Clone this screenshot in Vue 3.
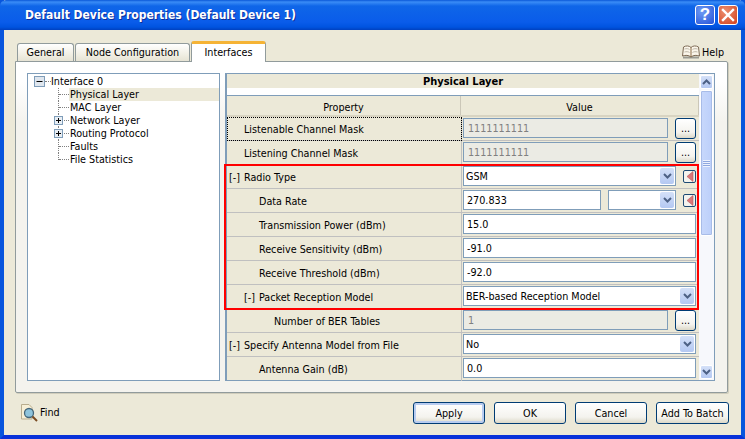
<template>
  <div class="window">
    <div class="titlebar">
      <span class="title">Default Device Properties (Default Device 1)</span>
      <button class="cap cap-help">?</button>
      <button class="cap cap-close">
        <svg width="14" height="14" viewBox="0 0 14 14"><path d="M2 2 L12 12 M12 2 L2 12" stroke="#fff" stroke-width="2.4" stroke-linecap="square" /></svg>
      </button>
    </div>

    <div class="body">
      <div class="tabbar">
        <div class="tab tab-general">General</div>
        <div class="tab tab-node">Node Configuration</div>
        <div class="tab tab-active">Interfaces</div>
        <div class="help-link">
          <svg width="18" height="16" viewBox="0 0 18 16">
            <path d="M1 13.500 H17" stroke="#9a9a92" stroke-width="2" />
            <path d="M1.500 3 C4 1.500 7 1.500 9 3.500 C11 1.500 14 1.500 16.500 3 L17.500 12 C14.500 11 11.500 11 9 13 C6.500 11 3.500 11 0.500 12 Z" fill="#fbf6ea" stroke="#7d6a55" />
            <path d="M9 3.500 V13" stroke="#8a6a44" />
            <path d="M2.500 5 C4.500 4.500 6 4.500 7.500 5.500 M2.500 8 C4.500 7.500 6 7.500 7.500 8.500" stroke="#bdb6a8" fill="none" />
            <path d="M10.500 5.500 C12 4.500 13.500 4.500 15.500 5 M10.500 8.500 C12 7.500 13.500 7.500 15.500 8" stroke="#bdb6a8" fill="none" />
          </svg>
          <span>Help</span>
        </div>
      </div>

      <div class="pane">
        <div class="tree">
          <div class="tree-row root">
            <span class="expander">
              <svg width="11" height="11" viewBox="0 0 11 11"><rect x="0.500" y="0.500" width="10" height="10" fill="#dfe6ee" stroke="#7f9db9" /><path d="M2.500 5.500 H8.500" stroke="#000" /></svg>
            </span>
            <span class="root-dash"></span>
            <span>Interface 0</span>
          </div>
          <div
            v-for="(node, i) in treeNodes"
            :key="node.label"
            class="tree-row child"
            :class="{ last: i === treeNodes.length - 1 }"
          >
            <span class="stem">
              <svg v-if="node.plus" class="plus" width="9" height="9" viewBox="0 0 9 9"><rect x="0.500" y="0.500" width="8" height="8" fill="#e8eef4" stroke="#7f9db9" /><path d="M2 4.500 H7 M4.500 2 V7" stroke="#000" /></svg>
            </span>
            <span class="tree-label" :class="{ selected: node.selected }">{{ node.label }}</span>
          </div>
        </div>

        <div class="props">
          <div class="props-main">
            <div class="section-title">Physical Layer</div>
            <div class="section-gap"></div>
            <div class="head">
              <div class="head-cell">Property</div>
              <div class="head-cell">Value</div>
            </div>
            <div
              v-for="(row, i) in rows"
              :key="row.name"
              class="row"
              :class="{ 'row-last': i === rows.length - 1 }"
            >
              <div class="name" :class="{ focused: row.focus }" :style="{ paddingLeft: row.level * 15 + 2 + 'px' }">
                <span v-if="row.open" class="bracket">[-]</span>{{ row.name }}
              </div>
              <div class="value">
                <template v-if="row.type === 'locked'">
                  <div class="field locked">{{ row.value }}</div>
                  <button class="dots">...</button>
                </template>
                <div v-else-if="row.type === 'text'" class="field">{{ row.value }}</div>
                <div v-else-if="row.type === 'combo'" class="field combo">
                  <span>{{ row.value }}</span>
                  <span class="drop"><svg width="9" height="6" viewBox="0 0 9 6"><path d="M1 1 L4.500 4.500 L8 1" fill="none" stroke="#4d6185" stroke-width="2" /></svg></span>
                </div>
                <template v-else-if="row.type === 'radio'">
                  <div class="field combo narrow">
                    <span>{{ row.value }}</span>
                    <span class="drop"><svg width="9" height="6" viewBox="0 0 9 6"><path d="M1 1 L4.500 4.500 L8 1" fill="none" stroke="#4d6185" stroke-width="2" /></svg></span>
                  </div>
                  <span class="marker"><svg width="8" height="11" viewBox="0 0 8 11"><path d="M7 0.500 V10.500 L1 5.500 Z" fill="#d9777a" stroke="#b9595c" stroke-width="0.600" /></svg></span>
                </template>
                <template v-else-if="row.type === 'rate'">
                  <div class="field rate">{{ row.value }}</div>
                  <div class="field combo unit">
                    <span></span>
                    <span class="drop"><svg width="9" height="6" viewBox="0 0 9 6"><path d="M1 1 L4.500 4.500 L8 1" fill="none" stroke="#4d6185" stroke-width="2" /></svg></span>
                  </div>
                  <span class="marker"><svg width="8" height="11" viewBox="0 0 8 11"><path d="M7 0.500 V10.500 L1 5.500 Z" fill="#d9777a" stroke="#b9595c" stroke-width="0.600" /></svg></span>
                </template>
              </div>
            </div>
            <div class="highlight"></div>
          </div>

          <div class="scrollbar">
            <div class="sb-btn"><svg width="9" height="6" viewBox="0 0 9 6"><path d="M1 5 L4.500 1.500 L8 5" fill="none" stroke="#4d6185" stroke-width="2" /></svg></div>
            <div class="sb-thumb"><span class="grip"></span></div>
            <div class="sb-space"></div>
            <div class="sb-btn"><svg width="9" height="6" viewBox="0 0 9 6"><path d="M1 1 L4.500 4.500 L8 1" fill="none" stroke="#4d6185" stroke-width="2" /></svg></div>
          </div>
        </div>
      </div>

      <div class="footer">
        <div class="find">
          <svg width="17" height="18" viewBox="0 0 17 18">
            <path d="M0.500 0.500 H8 L11 3.500 V15 H0.500 Z" fill="#f7efd6" stroke="#b9ad8e" />
            <circle cx="8" cy="9" r="4.500" fill="#8fc4dc" stroke="#44667a" stroke-width="1.300" />
            <path d="M11.500 12.500 L16 17" stroke="#7a4a20" stroke-width="2" />
          </svg>
          <span>Find</span>
        </div>
        <div class="actions">
          <button class="btn default">Apply</button>
          <button class="btn">OK</button>
          <button class="btn">Cancel</button>
          <button class="btn">Add To Batch</button>
        </div>
      </div>
    </div>
  </div>
</template>

<script setup>
const treeNodes = [
  { label: 'Physical Layer', selected: true },
  { label: 'MAC Layer' },
  { label: 'Network Layer', plus: true },
  { label: 'Routing Protocol', plus: true },
  { label: 'Faults' },
  { label: 'File Statistics' },
]

const rows = [
  { name: 'Listenable Channel Mask', level: 1, type: 'locked', value: '1111111111', focus: true },
  { name: 'Listening Channel Mask', level: 1, type: 'locked', value: '1111111111' },
  { name: 'Radio Type', level: 0, open: true, type: 'radio', value: 'GSM' },
  { name: 'Data Rate', level: 2, type: 'rate', value: '270.833' },
  { name: 'Transmission Power (dBm)', level: 2, type: 'text', value: '15.0' },
  { name: 'Receive Sensitivity (dBm)', level: 2, type: 'text', value: '-91.0' },
  { name: 'Receive Threshold (dBm)', level: 2, type: 'text', value: '-92.0' },
  { name: 'Packet Reception Model', level: 1, open: true, type: 'combo', value: 'BER-based Reception Model' },
  { name: 'Number of BER Tables', level: 3, type: 'locked', value: '1' },
  { name: 'Specify Antenna Model from File', level: 0, open: true, type: 'combo', value: 'No' },
  { name: 'Antenna Gain (dB)', level: 2, type: 'text', value: '0.0' },
]
</script>

<style>
html, body {
  margin: 0;
  background: #0831d9;
}
</style>

<style scoped>
* {
  box-sizing: border-box;
}

.window {
  width: 745px;
  height: 439px;
  display: flex;
  flex-direction: column;
  background: #ece9d8;
  border-left: 4px solid #0855dd;
  border-right: 4px solid #0855dd;
  border-bottom: 4px solid #0831d9;
  font-family: "DejaVu Sans Condensed", "DejaVu Sans", sans-serif;
  font-size: 10.7px;
  color: #000;
}

.titlebar {
  height: 30px;
  margin: 0 -4px;
  padding: 0 7px 0 25px;
  display: flex;
  align-items: center;
  gap: 3px;
  background: linear-gradient(#0a58d8 0, #3a8cf6 2px, #0f66e8 6px, #0a5cea 22px, #0054e0 27px, #0041c0 30px);
  border-radius: 6px 6px 0 0;
}

.title {
  flex: 1;
  color: #fff;
  font-weight: bold;
  font-size: 12px;
  text-shadow: 1px 1px 0 #0f2f9a;
}

.cap {
  width: 20px;
  height: 20px;
  padding: 0;
  border: 1px solid #fff;
  border-radius: 3px;
  display: flex;
  align-items: center;
  justify-content: center;
  color: #fff;
}

.cap-help {
  background: radial-gradient(circle at 35% 30%, #6f9cf4, #2452d8);
  font-family: "Liberation Sans", sans-serif;
  font-size: 17px;
  font-weight: bold;
}

.cap-close {
  background: radial-gradient(circle at 35% 30%, #ec8f70, #d2401c);
}

.body {
  flex: 1;
  min-height: 0;
  padding: 11px 13px 0 11px;
  display: flex;
  flex-direction: column;
}

.tabbar {
  height: 20px;
  display: flex;
  align-items: flex-end;
  padding-left: 2px;
  position: relative;
  z-index: 1;
}

.tab {
  height: 18px;
  margin-right: 1px;
  display: flex;
  align-items: center;
  justify-content: center;
  border: 1px solid #919b9c;
  border-bottom: none;
  border-radius: 3px 3px 0 0;
  background: linear-gradient(#fff, #f1efe4 60%, #e6e3d4);
}

.tab-general {
  width: 57px;
}

.tab-node {
  width: 115px;
}

.tab-active {
  width: 75px;
  height: 21px;
  margin: 0 0 -1px;
  padding-bottom: 2px;
  background: #fff;
  border-top: 3px solid #f5b335;
}

.help-link {
  margin-left: auto;
  margin-right: 4px;
  display: flex;
  align-items: center;
  gap: 2px;
  height: 20px;
  transform: translateY(1px);
}

.pane {
  height: 332px;
  padding: 11px 12px 11px 11px;
  display: flex;
  gap: 5px;
  border: 1px solid #919b9c;
  border-radius: 0 2px 2px 2px;
  box-shadow: 1px 1px 0 #d0cdbc;
  background: linear-gradient(#fff, #fff 20px, #f4f3ee 60px);
}

.tree {
  width: 193px;
  padding: 1px 0 0;
  background: #fff;
  border: 1px solid #7f9db9;
}

.tree-row {
  height: 13px;
  display: flex;
  align-items: center;
}

.root {
  padding-left: 6px;
}

.expander {
  width: 11px;
  height: 11px;
  display: flex;
}

.root-dash {
  width: 6px;
  border-top: 1px dotted #808080;
}

.child {
  padding-left: 30px;
}

.stem {
  width: 11px;
  height: 13px;
  flex: none;
  position: relative;
  border-left: 1px dotted #808080;
}

.stem::after {
  content: "";
  position: absolute;
  left: 0;
  top: 6px;
  width: 10px;
  border-top: 1px dotted #808080;
}

.last .stem {
  height: 7px;
  align-self: flex-start;
}

.plus {
  position: absolute;
  left: -5px;
  top: 2px;
  z-index: 1;
}

.tree-label {
  flex: 1;
  height: 13px;
  line-height: 13px;
  padding-left: 1px;
}

.tree-label.selected {
  background: #ece9d8;
}

.props {
  flex: 1;
  min-width: 0;
  display: flex;
  border: 1px solid #7f9db9;
  border-left-width: 2px;
  background: #fff;
}

.props-main {
  width: 472px;
  position: relative;
}

.section-title {
  height: 14px;
  line-height: 15px;
  text-align: center;
  font-weight: bold;
  font-size: 11px;
  background: #ece9d8;
}

.section-gap {
  height: 8px;
  border-bottom: 1px solid #7f9db9;
}

.head {
  height: 21px;
  display: grid;
  grid-template-columns: 234px 1fr;
  background: #ece9d8;
  border-bottom: 2px solid #d8d4c2;
}

.head-cell {
  display: flex;
  align-items: center;
  justify-content: center;
  padding-top: 3px;
  border-right: 1px solid #cbc7b8;
}

.row {
  height: 24px;
  display: grid;
  grid-template-columns: 235px 1fr;
  background: #ece9d8;
  border-bottom: 1px solid #c0c0c0;
}

.row-last {
  height: 23px;
  border-bottom: none;
}

.name {
  display: flex;
  align-items: center;
  white-space: nowrap;
  border-right: 1px solid #c0c0c0;
  margin-bottom: -1px;
}

.name.focused {
  outline: 1px dotted #000;
  outline-offset: -1px;
}

.bracket {
  width: 15px;
  flex: none;
}

.value {
  padding: 1px 3px 0 1px;
  display: flex;
  gap: 7px;
}

.field {
  height: 20px;
  flex: 1;
  padding-left: 3px;
  display: flex;
  align-items: center;
  justify-content: space-between;
  border: 1px solid #7f9db9;
  background: #fff;
}

.locked {
  color: #808080;
  background: #ebebe4;
  padding-left: 4px;
}

.combo {
  padding-left: 2px;
  padding-right: 1px;
}

.rate {
  flex: none;
  width: 138px;
}

.unit {
  flex: none;
  width: 68px;
  gap: 0;
}

.narrow {
  flex: none;
  width: 213px;
}

.drop {
  width: 14px;
  height: 16px;
  display: flex;
  align-items: center;
  justify-content: center;
  border-radius: 2px;
  background: linear-gradient(#d4e0f8, #b4c8f2);
}

.dots {
  width: 21px;
  height: 21px;
  flex: none;
  padding: 0 0 1px;
  font: inherit;
  border: 1px solid #003c74;
  border-radius: 3px;
  background: linear-gradient(#fff, #f4f3ee 70%, #dcd8c8);
}

.marker {
  width: 13px;
  height: 13px;
  flex: none;
  margin: 4px 0 0;
  display: flex;
  align-items: center;
  justify-content: center;
  border: 1px solid #1d4a74;
  border-radius: 2px;
  background: #f4f3ee;
}

.highlight {
  position: absolute;
  left: -3px;
  top: 90px;
  width: 475px;
  height: 146px;
  border: 2px solid #f00;
  pointer-events: none;
}

.scrollbar {
  flex: 1;
  padding: 1px;
  display: flex;
  flex-direction: column;
  gap: 1px;
  background: #f7f8fc;
}

.sb-btn {
  height: 14px;
  flex: none;
  display: flex;
  align-items: center;
  justify-content: center;
  border: 1px solid #fff;
  border-radius: 2px;
  background: linear-gradient(#d4e0f8, #b4c8f2);
}

.sb-thumb {
  height: 146px;
  flex: none;
  display: flex;
  align-items: center;
  justify-content: center;
  border: 1px solid #fff;
  border-radius: 2px;
  background: linear-gradient(90deg, #c8d8fb, #bccffa);
  box-shadow: 0 0 0 1px #a8bce8 inset;
}

.grip {
  width: 7px;
  height: 7px;
  background: repeating-linear-gradient(#eef3fe 0 1px, #8fa8df 1px 2px);
}

.sb-space {
  flex: 1;
}

.footer {
  flex: 1;
  padding: 9px 0 0 6px;
  display: flex;
  justify-content: space-between;
  align-items: flex-start;
  margin-right: -1px;
}

.find {
  height: 21px;
  display: flex;
  align-items: center;
  gap: 2px;
}

.actions {
  display: grid;
  grid-template-columns: 72px 72px 72px 73px;
  gap: 9px;
}

.btn {
  height: 22px;
  padding: 0;
  font: inherit;
  border: 1px solid #003c74;
  border-radius: 3px;
  background: linear-gradient(#fff, #f4f3ee 70%, #dcd8c8);
}

.btn.default {
  box-shadow: inset 0 0 0 2px #b8ccf0;
}
</style>
